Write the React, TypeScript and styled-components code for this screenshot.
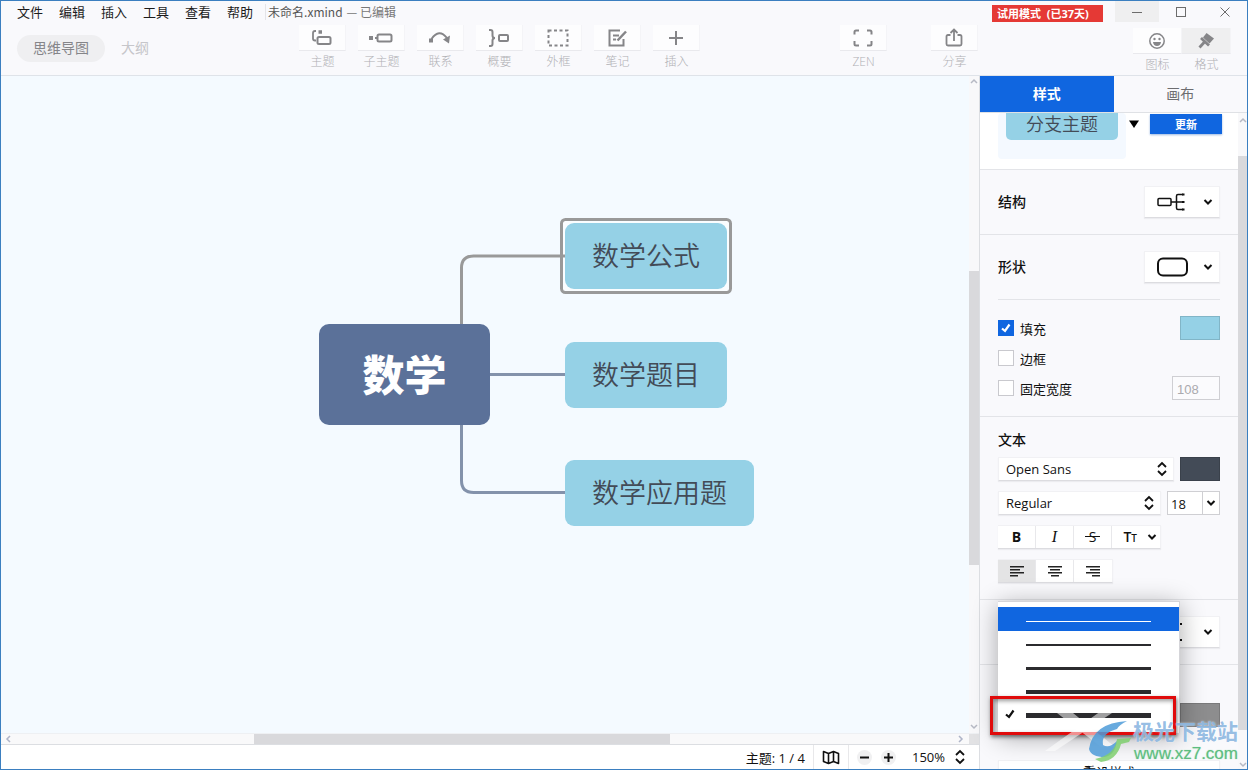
import React from "react";
import styled, { createGlobalStyle, css } from "styled-components";

const Global = createGlobalStyle`
  * { box-sizing: border-box; }
  html, body, #root { height: 100%; }
  body { margin: 0; overflow: hidden; font-family: "Open Sans", "Noto Sans CJK SC", sans-serif; font-size: 13px; color: #111; }
  button, input, select { font: inherit; color: inherit; margin: 0; padding: 0; border: 0; background: none; }
`;

const Window = styled.div`
  height: 100vh; display: flex; flex-direction: column; position: relative;
  border: 1px solid #3b7fc0; background: #f9f9fc; overflow: hidden;
`;

/* ---------- header ---------- */
const Header = styled.header`flex: none; height: 75px; border-bottom: 1px solid #dfe3e9; display: flex;`;
const HeaderMain = styled.div`flex: 1; min-width: 0; display: flex; flex-direction: column;`;
const MenuBar = styled.nav`height: 22px; display: flex; align-items: center; gap: 16px; padding-left: 16px; white-space: nowrap;`;
const MenuItem = styled.button`line-height: 20px; color: #1c1c1c;`;
const DocTitle = styled.div`
  display: flex; gap: 4px; margin-left: -4px; padding-left: 2px; font-family: "Noto Sans CJK SC", sans-serif;
  font-size: 12px; line-height: 16px; color: #555; border-left: 1px solid #e4e4e8;
  span + span { color: #777; }
`;
const ToolBar = styled.div`flex: 1; display: flex; align-items: flex-start; padding: 2px 1px 0 16px;`;
const Modes = styled.div`width: 282px; flex: none; display: flex; gap: 16px; padding-top: 10px;`;
const Mode = styled.button<{ $on?: boolean }>`
  height: 27px; font-size: 14px; line-height: 26px; padding-bottom: 1px; color: #c6c6ca; border-radius: 14px;
  ${p => p.$on && css`width: 88px; background: #efeff1; color: #858589;`}
`;
const Tools = styled.div`display: flex; gap: 12px;`;
const ToolsRight = styled.div`display: flex; gap: 44px; margin-left: auto;`;
const Tool = styled.button`
  width: 47px; display: flex; flex-direction: column; align-items: center; font-size: 12px; line-height: 18px; color: #b0b0b4; font-weight: 300;
`;
const ToolIcon = styled.span<{ $on?: boolean }>`
  width: 100%; height: 26px; display: flex; align-items: center; justify-content: center; margin-bottom: 2px;
  color: #858588; background: ${p => (p.$on ? "#efeff0" : "#fdfdfe")};
  border-bottom: 1px solid #e9e9ed; border-right: 1px solid #f4f4f7;
`;
const HeaderSide = styled.div`width: 268px; flex: none; display: flex; flex-direction: column; align-items: flex-end;`;
const Caption = styled.div`display: flex; align-items: flex-start;`;
const Trial = styled.div`
  width: 111px; height: 17px; margin: 4px 12px 0 0; background: #e53935; color: #fff; font-size: 11px; font-weight: 700;
  line-height: 17px; padding-left: 5px; white-space: pre;
`;
const CaptionButton = styled.button<{ $on?: boolean }>`
  width: 44px; height: 21px; display: flex; align-items: center; justify-content: center; color: #6c6c6c;
  background: ${p => (p.$on ? "#efeff0" : "transparent")};
`;
const SideTools = styled.div`display: flex; padding: 6px 16px 0 0; ${Tool} { width: 49px; }`;

/* ---------- body ---------- */
const Body = styled.div`flex: 1; min-height: 0; display: flex;`;
const Work = styled.main`flex: 1; min-width: 0; display: flex; flex-direction: column;`;
const CanvasRow = styled.div`flex: 1; min-height: 0; display: flex;`;
const Canvas = styled.div`flex: 1; min-width: 0; position: relative; overflow: hidden; background: #f4faff;`;
const Lines = styled.svg`position: absolute; left: 0; top: 0;`;
const Topic = styled.div<{ $x: number; $y: number; $w: number }>`
  position: absolute; left: ${p => p.$x}px; top: ${p => p.$y}px; width: ${p => p.$w}px; height: 66px;
  border-radius: 9px; background: #95d1e6; color: #434b57; font-size: 27px; font-weight: 350; line-height: 64px; text-align: center;
  font-family: "Noto Sans CJK SC", sans-serif;
`;
const Root = styled(Topic)`height: 101px; line-height: 98px; background: #5b7199; color: #fff; font-size: 42px; font-weight: 900; border-radius: 10px;`;
const VBar = styled.div`
  width: 10px; flex: none; display: flex; flex-direction: column; align-items: center; background: #f8f8fa; color: #b6b9c4; padding: 2px 0;
`;
const HBar = styled.div`
  height: 11px; flex: none; display: flex; align-items: center; background: #f9f9fa; border-top: 1px solid #eef0f3; color: #aeb4c8; padding-left: 4px;
`;
const Corner = styled.div`width: 10px; height: 10px; background: #e2e2e4; margin-left: 4px;`;
const VThumb = styled.div<{ $before: number; $size: number }>`
  width: 100%; flex: 0 1 auto; margin-top: ${p => p.$before}px; height: ${p => p.$size}px; background: #d9d9dc; margin-bottom: auto;
`;
const HThumb = styled.div`width: 416px; height: 10px; margin: 0 auto 0 241px; background: #d9d9dc;`;
const Status = styled.footer`
  height: 25px; flex: none; display: flex; align-items: center; justify-content: flex-end; background: #fff;
  border-top: 1px solid #dcdee2; padding-right: 13px; white-space: nowrap;
`;
const StatusCell = styled.div`height: 100%; display: flex; align-items: center; padding: 0 8px; border-right: 1px solid #e8e8ea;`;
const StatusButton = styled.button`display: flex;`;
const Zoom = styled.div`display: flex; align-items: center; gap: 9px; padding-left: 8px;`;
const RoundButton = styled.button`
  width: 15px; height: 15px; border-radius: 50%; background: #f0f0f1; display: flex; align-items: center; justify-content: center;
`;
const ZoomValue = styled.span`margin-left: 7px;`;

/* ---------- format panel ---------- */
const Panel = styled.aside`width: 268px; flex: none; display: flex; flex-direction: column; border-left: 1px solid #dcdee2;`;
const Tabs = styled.div`flex: none; height: 37px; display: flex; border-bottom: 1px solid #dfe1e5;`;
const Tab = styled.button<{ $on?: boolean }>`
  flex: 1; height: 36px; font-size: 14px; line-height: 35px; padding-bottom: 1px; color: #6d6d70;
  ${p => p.$on && css`background: #1066e0; color: #fff; font-weight: 700;`}
`;
const Scroller = styled.div`flex: 1; min-height: 0; display: flex; overflow: hidden;`;
const Sections = styled.div`flex: 1; min-width: 0;`;
const Section = styled.section<{ $last?: boolean }>`
  padding: 0 18px; ${p => !p.$last && css`border-bottom: 1px solid #e3e4e8;`}
`;
const StylePreview = styled(Section)`background: #fff; height: 57px; display: flex; align-items: flex-start; padding-right: 16px;`;
const PreviewBox = styled.div`
  width: 128px; height: 46px; overflow: hidden; display: flex; align-items: flex-end; padding: 0 8px 19px; background: #f4f9ff; border-radius: 4px;
`;
const PreviewTopic = styled.div`
  flex: 1; height: 27px; line-height: 21px; border-radius: 0 0 5px 5px; background: #95d1e6; color: #434b57; font-size: 18px; font-weight: 350; text-align: center;
  font-family: "Noto Sans CJK SC", sans-serif;
`;
const PreviewArrow = styled.button`display: flex; margin: 7px 11px 0 3px;`;
const Update = styled.button`
  flex: 1; height: 20px; margin-top: 1px; background: #1066e0; color: #fff; font-size: 11px; font-weight: 700; box-shadow: 0 1px 2px #9bb7e0;
`;
const Row = styled.div<{ $h: number }>`display: flex; align-items: center; justify-content: space-between; height: ${p => p.$h}px;`;
const InnerRow = styled(Row)`border-bottom: 1px solid #e3e4e8;`;
const Title = styled.h2`margin: 0; font-size: 14px; line-height: 20px; font-weight: 500;`;
const raised = css`background: #fff; border: 1px solid #f1f1f4; border-bottom-color: #dcdce0; box-shadow: 0 1px 1px #ececf0;`;
const Picker = styled.button`${raised} width: 76px; height: 32px; display: flex; align-items: center; justify-content: space-between; padding: 0 6px 0 11px;`;
const Checks = styled.div`padding: 13px 0;`;
const Check = styled.label`display: flex; align-items: center; gap: 6px;`;
const Box = styled.input`
  appearance: none; width: 16px; height: 16px; background: #fff; border: 1px solid #c9c9ce;
  &:checked {
    border-color: #1066e0;
    background: #1066e0;
  }
`;
const BoxWrap = styled.span`display: grid; > * { grid-area: 1 / 1; } svg { pointer-events: none; }`;
const Swatch = styled.button<{ $c: string }>`width: 40px; height: 24px; background: ${p => p.$c}; border: 1px solid #0002;`;
const WidthInput = styled.input`
  width: 48px; height: 24px; border: 1px solid #cfcfd3; background: #fbfbfd; padding: 2px 0 0 4px; color: #aaaaae;
  font-family: "Liberation Sans", sans-serif;
`;
const TextSection = styled(Section)`padding-top: 13px; padding-bottom: 16px;`;
const TextTitle = styled(Title)`margin-bottom: 7px;`;
const TextRow = styled.div`display: flex; justify-content: space-between; margin-bottom: 10px; &:last-child { margin-bottom: 0; }`;
const SelectWrap = styled.span`flex: 1; display: grid; margin-right: 6px; > * { grid-area: 1 / 1; } svg { justify-self: end; align-self: center; margin-right: 6px; pointer-events: none; }`;
const Select = styled.select`${raised} appearance: none; width: 100%; height: 24px; padding-left: 7px;`;
const Combo = styled.div`display: flex; width: 53px; height: 24px; background: #fff; border: 1px solid #cfcfd3;`;
const ComboInput = styled.input`width: 35px; padding: 2px 0 0 3px; border-right: 1px solid #cfcfd3;`;
const ComboButton = styled.button`flex: 1; display: flex; align-items: center; justify-content: center;`;
const Segments = styled.div`${raised} display: flex; height: 24px; border-left: 0;`;
const Segment = styled.button<{ $on?: boolean; $wide?: boolean }>`
  width: ${p => (p.$wide ? 48 : 38)}px; display: flex; align-items: center; justify-content: center; gap: 10px;
  border-right: 1px solid #e8e8eb; background: ${p => (p.$on ? "#e4e4e5" : "transparent")};
  ${p => p.$wide && css`justify-content: flex-end; padding-right: 3px;`}
  &:last-child { border-right: 0; }
`;
const Glyph = styled.span`font-size: 14px; line-height: 18px; small { font-size: 10px; } font-weight: 600;`;
const BoldGlyph = styled.b`font-size: 14px; line-height: 18px;`;
const ItalicGlyph = styled.i`font: italic 400 16px/18px "Liberation Serif", serif;`;
const StrikeGlyph = styled(Glyph)`text-decoration: line-through; white-space: pre; font-weight: 400;`;
const BranchColor = styled.div`height: 95px; padding-top: 38px; display: flex; justify-content: flex-end; align-items: flex-start;`;
const Reset = styled.button`${raised} width: 100%; height: 24px; line-height: 18px;`;
const PanelBar = styled(VBar)`width: 9px; padding: 4px 0 0;`;

/* ---------- line width menu ---------- */
const Menu = styled.div`
  position: absolute; right: 67px; top: 600px; width: 182px; height: 132px; padding: 5px 0; background: #fff;
  border-top: 1px solid #d5d5d9; border-right: 1px solid #d5d5d9; box-shadow: 0 4px 24px #0005; display: flex; flex-direction: column;
`;
const WidthOption = styled.button<{ $on?: boolean }>`
  height: 24px; flex: none; display: flex; align-items: flex-end; padding-bottom: 9px;
  background: ${p => (p.$on ? "#1066e0" : "transparent")}; color: ${p => (p.$on ? "#fff" : "#2b2b2e")};
`;
const Mark = styled.span`width: 28px; height: 8px; display: flex; align-items: center; justify-content: center; padding-right: 4px;`;
const Stroke = styled.span<{ $t: number }>`width: 125px; height: ${p => p.$t}px; background: currentColor;`;
const Highlight = styled.div`
  position: absolute; right: 71px; top: 695px; width: 186px; height: 39px; border: 3px solid #e00b0b; box-shadow: 1px 2px 4px #0008, inset 1px 2px 4px #0006; pointer-events: none;
`;
const Watermark = styled.div`position: absolute; right: 9px; bottom: 4px; display: flex; align-items: flex-end; pointer-events: none;`;
const MarkArt = styled.svg`display: block; margin-right: -20px;`;
const MarkText = styled.div`position: relative; display: flex; flex-direction: column; align-items: flex-end;`;
const MarkName = styled.span`
  font: 700 21px/26px "Noto Sans CJK SC", sans-serif; color: #86b3dfdd; text-shadow: 0 0 2px #fffa;
`;
const MarkUrl = styled.span`
  font: 400 17px/22px "Liberation Sans", sans-serif; color: #5dbd80; text-shadow: 0 0 2px #fff, 0 0 1px #5dbd80;
`;

/* ---------- icons ---------- */
const Chevron = () => (
  <svg width="10" height="8" viewBox="0 0 10 8" fill="none" stroke="#111" strokeWidth="2"><path d="M1.500 2l3.500 3.500L8.500 2" /></svg>
);
const UpDown = () => (
  <svg width="12" height="16" viewBox="0 0 12 16" fill="none" stroke="#111" strokeWidth="1.800"><path d="M2 6l4-4 4 4M2 10l4 4 4-4" /></svg>
);
const arrows: Record<string, string> = { up: "M1 5l3-3 3 3", down: "M1 2l3 3 3-3", left: "M5 1L2 4l3 3", right: "M2 1l3 3-3 3" };
const Arrow = ({ to }: { to: string }) => (
  <svg width="8" height="8" viewBox="0 0 8 8" fill="none" stroke="currentColor" strokeWidth="1.500"><path d={arrows[to]} /></svg>
);
const Tick = ({ color }: { color: string }) => (
  <svg width="16" height="16" viewBox="0 0 16 16" fill="none" stroke={color} strokeWidth="2.200"><path d="M4 8.500L7 11l4.500-6.500" /></svg>
);
const Align = ({ kind }: { kind: "left" | "center" | "right" }) => (
  <svg width="16" height="13" viewBox="0 0 16 13" fill="#222">
    {[14, 10, 14, 8].map((w, i) => (
      <rect key={i} width={w} height="1.500" y={i * 3 + 1} x={kind === "left" ? 1 : kind === "right" ? 15 - w : 8 - w / 2} />
    ))}
  </svg>
);
const Icon = ({ children }: { children: React.ReactNode }) => (
  <svg width="24" height="22" viewBox="0 0 24 22" fill="none" stroke="currentColor" strokeWidth="2">{children}</svg>
);

const tools = [
  { name: "主题", icon: <><path d="M6 4H5Q3 4 3 6v5.500q0 2 2 2h1" strokeWidth="1.800" /><rect x="7.500" y="10" width="13" height="7" rx="1.500" /><path d="M8.500 5h3.500" strokeWidth="3.500" /></> },
  { name: "子主题", icon: <><path d="M0 11h4" strokeWidth="4" /><path d="M6 11h3" /><rect x="8.500" y="7.500" width="14" height="7" rx="1.500" /></> },
  { name: "联系", icon: <><path d="M3.500 12Q11 1 19 11" /><path d="M1 13.500h4" strokeWidth="4" /><path d="M15 12.500l7-4-1 8z" fill="currentColor" stroke="none" /></> },
  { name: "概要", icon: <><path d="M2 3h1.500Q5.500 3 5.500 5v3.500Q5.500 11 8 11q-2.500 0-2.500 2.500V17q0 2-2 2H2" /><rect x="12" y="8" width="9" height="6" rx="1" /></> },
  { name: "外框", icon: <rect x="2.500" y="3.500" width="19" height="15" strokeDasharray="3 2.500" /> },
  { name: "笔记", icon: <><path d="M15 3.500H4.500v15h14V12M8 8.500h6M8 12.500h3" /><path d="M12.500 13.500l8.500-9" strokeWidth="2.500" /></> },
  { name: "插入", icon: <path d="M12 4v14M5 11h14" /> },
];

const StructureIcon = ({ line = false }: { line?: boolean }) => (
  <svg width="30" height="20" viewBox="0 0 30 20" fill="none" stroke="#111" strokeWidth="1.500">
    {!line && <rect x="2" y="6.500" width="13" height="7" rx="1" />}
    {line ? <path d="M14 10h6" /> : <path d="M15 10h11M27 2.500h-5q-1.500 0-1.500 1.500v12q0 1.500 1.500 1.500h5" />}
    <path d={line ? "M24 1h2v2h-2zM24 17h2v2h-2z" : "M26 1.500h2.500v2H26zM26 9h2.500v2H26zM26 16.500h2.500v2H26z"} fill="#111" stroke="none" />
  </svg>
);

export default function App() {
  return (
    <Window>
      <Global />
      <Header>
        <HeaderMain>
          <MenuBar>
            {["文件", "编辑", "插入", "工具", "查看", "帮助"].map(m => <MenuItem key={m}>{m}</MenuItem>)}
            <DocTitle><span>未命名.xmind</span><span>— 已编辑</span></DocTitle>
          </MenuBar>
          <ToolBar>
            <Modes><Mode $on>思维导图</Mode><Mode>大纲</Mode></Modes>
            <Tools>
              {tools.map(t => <Tool key={t.name}><ToolIcon><Icon>{t.icon}</Icon></ToolIcon>{t.name}</Tool>)}
            </Tools>
            <ToolsRight>
              <Tool><ToolIcon><Icon><path d="M3.500 7.500V5q0-1.500 1.500-1.500h3M16 3.500h3q1.500 0 1.500 1.500v2.500M20.500 14v3q0 1.500-1.500 1.500h-3M8 18.500H5q-1.500 0-1.500-1.500v-3" /></Icon></ToolIcon>ZEN</Tool>
              <Tool><ToolIcon><Icon><path d="M8.500 8H6q-1.500 0-1.500 1.500V17q0 1.500 1.500 1.500h12q1.500 0 1.500-1.500V9.500Q19.500 8 18 8h-2.500M12 14V3M8.500 6L12 2.500 15.500 6" strokeWidth="1.800" /></Icon></ToolIcon>分享</Tool>
            </ToolsRight>
          </ToolBar>
        </HeaderMain>
        <HeaderSide>
          <Caption>
            <Trial>试用模式  (已37天)</Trial>
            <CaptionButton $on aria-label="最小化"><svg width="10" height="10" stroke="currentColor"><path d="M0 5.500h10" /></svg></CaptionButton>
            <CaptionButton aria-label="最大化"><svg width="10" height="10" fill="none" stroke="currentColor"><rect x=".5" y=".5" width="9" height="9" /></svg></CaptionButton>
            <CaptionButton aria-label="关闭"><svg width="10" height="10" stroke="currentColor"><path d="M.5.5l9 9M9.500.5l-9 9" /></svg></CaptionButton>
          </Caption>
          <SideTools>
            <Tool><ToolIcon><Icon><circle cx="12" cy="11" r="7.200" strokeWidth="1.500" /><circle cx="9.500" cy="9" r="1.200" fill="currentColor" stroke="none" /><circle cx="14.500" cy="9" r="1.200" fill="currentColor" stroke="none" /><path d="M8 12h8q-.5 4-4 4t-4-4z" fill="currentColor" stroke="none" /></Icon></ToolIcon>图标</Tool>
            <Tool><ToolIcon $on><Icon><path d="M12.500 3L20 8.500 15.500 13.500 9 7.500z" fill="currentColor" stroke="none" /><path d="M7 8l8 7.500M10.500 12l-5 5.500" strokeWidth="2.800" /></Icon></ToolIcon>格式</Tool>
          </SideTools>
        </HeaderSide>
      </Header>

      <Body>
        <Work>
          <CanvasRow>
            <Canvas>
              <Lines width="800" height="500" fill="none" strokeWidth="3">
                <rect x="560.500" y="143.500" width="169" height="73" rx="4" fill="#fafdff" stroke="#999" />
                <path d="M460.500 260V192q0-12 12-12H564" stroke="#999" />
                <path d="M480 298.500H564" stroke="#8392ab" />
                <path d="M460.500 340V404.500q0 12 12 12H564" stroke="#8392ab" />
              </Lines>
              <Root $x={318} $y={248} $w={171}>数学</Root>
              <Topic $x={564} $y={147} $w={162}>数学公式</Topic>
              <Topic $x={564} $y={266} $w={162}>数学题目</Topic>
              <Topic $x={564} $y={384} $w={189}>数学应用题</Topic>
            </Canvas>
            <VBar><Arrow to="up" /><VThumb $before={185} $size={294} /><Arrow to="down" /></VBar>
          </CanvasRow>
          <HBar><Arrow to="left" /><HThumb /><Arrow to="right" /><Corner /></HBar>
          <Status>
            <StatusCell>主题: 1 / 4</StatusCell>
            <StatusCell>
              <StatusButton aria-label="导航">
                <svg width="18" height="16" viewBox="0 0 18 16" fill="none" stroke="#111" strokeWidth="1.600" strokeLinejoin="round"><path d="M1.500 2.500l5 2 5-2 5 2v10l-5-2-5 2-5-2zM6.500 4.500v10M11.500 2.500v10" /></svg>
              </StatusButton>
            </StatusCell>
            <Zoom>
              <RoundButton aria-label="缩小"><svg width="9" height="9" stroke="#111" strokeWidth="2"><path d="M0 4.500h9" /></svg></RoundButton>
              <RoundButton aria-label="放大"><svg width="9" height="9" stroke="#111" strokeWidth="2"><path d="M0 4.500h9M4.500 0v9" /></svg></RoundButton>
              <ZoomValue>150%</ZoomValue>
              <StatusButton aria-label="缩放比例"><UpDown /></StatusButton>
            </Zoom>
          </Status>
        </Work>

        <Panel>
          <Tabs><Tab $on>样式</Tab><Tab>画布</Tab></Tabs>
          <Scroller>
            <Sections>
              <StylePreview>
                <PreviewBox><PreviewTopic>分支主题</PreviewTopic></PreviewBox>
                <PreviewArrow aria-label="选择样式"><svg width="10" height="8"><path d="M0 .5h10L5 8z" /></svg></PreviewArrow>
                <Update>更新</Update>
              </StylePreview>
              <Section>
                <Row $h={64}><Title>结构</Title><Picker aria-label="结构"><StructureIcon /><Chevron /></Picker></Row>
              </Section>
              <Section>
                <InnerRow $h={65}>
                  <Title>形状</Title>
                  <Picker aria-label="形状">
                    <svg width="32" height="20" fill="none" stroke="#111" strokeWidth="2"><rect x="2" y="1.500" width="29" height="17" rx="5" /></svg>
                    <Chevron />
                  </Picker>
                </InnerRow>
                <Checks>
                  <Row $h={30}>
                    <Check><BoxWrap><Box type="checkbox" defaultChecked /><Tick color="#fff" /></BoxWrap>填充</Check>
                    <Swatch $c="#95d1e6" aria-label="填充颜色" />
                  </Row>
                  <Row $h={30}><Check><Box type="checkbox" />边框</Check></Row>
                  <Row $h={30}><Check><Box type="checkbox" />固定宽度</Check><WidthInput aria-label="宽度" defaultValue="108" /></Row>
                </Checks>
              </Section>
              <TextSection>
                <TextTitle>文本</TextTitle>
                <TextRow>
                  <SelectWrap><Select aria-label="字体"><option>Open Sans</option></Select><UpDown /></SelectWrap>
                  <Swatch $c="#434b57" aria-label="文本颜色" />
                </TextRow>
                <TextRow>
                  <SelectWrap><Select aria-label="字重"><option>Regular</option></Select><UpDown /></SelectWrap>
                  <Combo><ComboInput aria-label="字号" defaultValue="18" /><ComboButton aria-label="选择字号"><Chevron /></ComboButton></Combo>
                </TextRow>
                <TextRow>
                  <Segments>
                    <Segment aria-label="粗体"><BoldGlyph>B</BoldGlyph></Segment>
                    <Segment aria-label="斜体"><ItalicGlyph>I</ItalicGlyph></Segment>
                    <Segment aria-label="删除线"><StrikeGlyph> S </StrikeGlyph></Segment>
                    <Segment $wide aria-label="大小写"><Glyph>T<small>T</small></Glyph><Chevron /></Segment>
                  </Segments>
                </TextRow>
                <TextRow>
                  <Segments>
                    <Segment $on aria-label="左对齐"><Align kind="left" /></Segment>
                    <Segment aria-label="居中"><Align kind="center" /></Segment>
                    <Segment aria-label="右对齐"><Align kind="right" /></Segment>
                  </Segments>
                </TextRow>
              </TextSection>
              <Section>
                <Row $h={64}><span /><Picker aria-label="分支"><StructureIcon line /><Chevron /></Picker></Row>
              </Section>
              <Section $last>
                <BranchColor><Swatch $c="#8d8d8e" aria-label="分支颜色" /></BranchColor>
                <Reset>重设样式</Reset>
              </Section>
            </Sections>
            <PanelBar><Arrow to="up" /><VThumb $before={31} $size={574} /><Arrow to="down" /></PanelBar>
          </Scroller>
        </Panel>
      </Body>

      <Menu>
        {[1, 2, 3, 4, 5].map(t => (
          <WidthOption key={t} $on={t === 1} aria-label={`线宽 ${t}`}>
            <Mark>{t === 5 && <Tick color="#111" />}</Mark><Stroke $t={t} />
          </WidthOption>
        ))}
      </Menu>
      <Highlight />
      <Watermark>
        <MarkArt width="110" height="60" viewBox="0 0 110 60">
          <path d="M14 8h16l42 34H58zM58 6h14L12 46H2z" fill="#ffffff" opacity=".55" />
          <path d="M46 44q4-26 38-28-8 4-10 8-16 4-14 16 6 4 14-4-2 14-12 16-14 0-16-8z" fill="#4e9bd8" opacity=".85" />
          <path d="M52 54q20-4 22-20l14-1-2 4-8 2q-4 16-20 18z" fill="#7fcf6f" opacity=".85" />
        </MarkArt>
        <MarkText><MarkName>极光下载站</MarkName><MarkUrl>www.xz7.com</MarkUrl></MarkText>
      </Watermark>
    </Window>
  );
}
